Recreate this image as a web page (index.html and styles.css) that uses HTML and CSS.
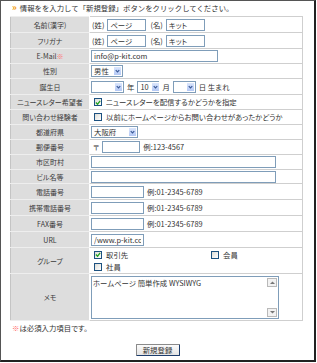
FILE: index.html
```html
<!DOCTYPE html>
<html lang="ja">
<head>
<meta charset="utf-8">
<link rel="stylesheet" href="styles.css">
</head>
<body>
<div class="frame">
  <p class="lead"><span class="mark">»</span>情報をを入力して「新規登録」ボタンをクリックしてください。</p>
  <table class="form">
    <tr class="t16"><th>名前(漢字)</th><td><span class="pre">(姓)</span><input class="tx name" value="ページ"><span class="pre">(名)</span><input class="tx name" value="キット"></td></tr>
    <tr class="t16"><th>フリガナ</th><td><span class="pre">(姓)</span><input class="tx name" value="ページ"><span class="pre">(名)</span><input class="tx name" value="キット"></td></tr>
    <tr><th>E-Mail<span class="req">※</span></th><td><input class="tx mail" value="info@p-kit.com"></td></tr>
    <tr><th>性別</th><td><span class="sel w32"><span class="val">男性</span><span class="arr"><svg viewBox="0 0 8 10" width="8" height="10"><polyline points="2,4 4,6 6,4" fill="none" stroke="#3a5a98" stroke-width="1.4"/></svg></span></span></td></tr>
    <tr class="t16"><th>誕生日</th><td><span class="sel w33"><span class="val"></span><span class="arr"><svg viewBox="0 0 8 10" width="8" height="10"><polyline points="2,4 4,6 6,4" fill="none" stroke="#3a5a98" stroke-width="1.4"/></svg></span></span><span class="unit">年</span><span class="sel w22"><span class="val">10</span><span class="arr"><svg viewBox="0 0 8 10" width="8" height="10"><polyline points="2,4 4,6 6,4" fill="none" stroke="#3a5a98" stroke-width="1.4"/></svg></span></span><span class="unit">月</span><span class="sel w23"><span class="val"></span><span class="arr"><svg viewBox="0 0 8 10" width="8" height="10"><polyline points="2,4 4,6 6,4" fill="none" stroke="#3a5a98" stroke-width="1.4"/></svg></span></span><span class="unit">日 生まれ</span></td></tr>
    <tr><th>ニュースレター希望者</th><td><label class="chk"><span class="cb"><svg viewBox="0 0 7 7" width="7" height="7"><polyline points="1,3.5 3,5.5 6,1.5" fill="none" stroke="#21a121" stroke-width="1.5"/></svg></span>ニュースレターを配信するかどうかを指定</label></td></tr>
    <tr><th>問い合わせ経験者</th><td><label class="chk"><span class="cb"></span>以前にホームページからお問い合わせがあったかどうか</label></td></tr>
    <tr><th>都道府県</th><td><span class="sel w47"><span class="val">大阪府</span><span class="arr"><svg viewBox="0 0 8 10" width="8" height="10"><polyline points="2,4 4,6 6,4" fill="none" stroke="#3a5a98" stroke-width="1.4"/></svg></span></span></td></tr>
    <tr><th>郵便番号</th><td><span class="pre zipmark">〒</span><input class="tx zip" value=""><span class="eg">例:123-4567</span></td></tr>
    <tr><th>市区町村</th><td><input class="tx wide" value=""></td></tr>
    <tr class="t14"><th>ビル名等</th><td><input class="tx wide" value=""></td></tr>
    <tr class="t16"><th>電話番号</th><td><input class="tx tel" value=""><span class="eg">例:01-2345-6789</span></td></tr>
    <tr class="t16"><th>携帯電話番号</th><td><input class="tx tel" value=""><span class="eg">例:01-2345-6789</span></td></tr>
    <tr class="t16"><th>FAX番号</th><td><input class="tx tel" value=""><span class="eg">例:01-2345-6789</span></td></tr>
    <tr class="t16"><th>URL</th><td><input class="tx tel url" value="/www.p-kit.com"></td></tr>
    <tr class="t26"><th>グループ</th><td><div class="opts">
      <label class="chk"><span class="cb"><svg viewBox="0 0 7 7" width="7" height="7"><polyline points="1,3.5 3,5.5 6,1.5" fill="none" stroke="#21a121" stroke-width="1.5"/></svg></span>取引先</label>
      <label class="chk"><span class="cb"></span>会員</label>
      <label class="chk"><span class="cb"></span>社員</label>
    </div></td></tr>
    <tr class="t47"><th>メモ</th><td class="memocell"><div class="memo"><textarea class="memotext">ホームページ 簡単作成 WYSIWYG</textarea><div class="sb"><span class="sbtn"><svg viewBox="0 0 7 5" width="7" height="5"><polygon points="1,4 3.5,1.5 6,4" fill="#777"/></svg></span><span class="sbtn"><svg viewBox="0 0 7 5" width="7" height="5"><polygon points="1,1 3.5,3.5 6,1" fill="#777"/></svg></span></div></div></td></tr>
  </table>
  <p class="note"><span class="req">※</span>は必須入力項目です。</p>
  <div class="actions"><button class="submit" type="button">新規登録</button></div>
</div>
</body>
</html>
```
FILE: styles.css
```css
* { box-sizing: border-box; }
html, body { margin: 0; padding: 0; background: #fff; }
body {
  font-family: "Noto Sans CJK JP", "Noto Sans", sans-serif;
  font-size: 7.4px;
  color: #333;
  font-feature-settings: "palt";
}
.frame {
  width: 316px;
  height: 362px;
  border-top: 1px solid #555;
  border-left: 1px solid #555;
  border-right: 2px solid #222;
  border-bottom: 2px solid #222;
  padding-left: 9px;
}
.lead {
  margin: 0;
  height: 15px;
  padding: 1px 0 0 2px;
  line-height: 12px;
  white-space: nowrap;
  font-feature-settings: normal;
}
.mark {
  color: #f39800;
  font-weight: bold;
  font-size: 9px;
  margin-right: 3px;
}
.req { color: #f66; }
.form {
  width: 293px;
  border-collapse: collapse;
  border: 1px solid #c4c4c4;
}
.form th, .form td {
  border: 1px solid #cfcfcf;
  height: 15px;
  padding: 0 2px 0 1px;
  line-height: 12px;
  white-space: nowrap;
  vertical-align: middle;
}
.form tr.t14 > * { height: 14px; }
.form tr.t16 > * { height: 16px; }
.form tr.t26 > * { height: 26px; }
.form tr.t47 > * { height: 47px; }
.form th {
  width: 79px;
  background: #dddddd;
  font-weight: normal;
  font-size: 7px;
  color: #3a3a3a;
  text-align: center;
  padding: 0 1px;
  border-color: #eeeeee #ffffff #eeeeee #c4c4c4;
}
.tx {
  height: 12px;
  margin: 0;
  padding: 0 2px;
  border: 1px solid #7f9db9;
  font: inherit;
  color: #333;
  background: #fff;
  vertical-align: top;
  font-feature-settings: "palt";
}
.pre { margin: 0 3px 0 1px; vertical-align: top; }
.name { width: 39px; margin-right: 3px; }
.mail { width: 127px; }
.zip { width: 38px; }
.zipmark { margin-left: 2px; margin-right: 3px; }
.wide { width: 185px; }
.tel { width: 53px; }
.eg { margin-left: 3px; vertical-align: top; }
.sel {
  display: inline-flex;
  height: 12px;
  border: 1px solid #7f9db9;
  background: #fff;
  vertical-align: top;
}
.sel .val { flex: 1; padding: 0 2px; line-height: 10px; }
.sel .arr {
  width: 9px;
  background: linear-gradient(#dbe6fc, #b4c8f5);
  border: 1px solid #fff;
  display: flex;
  align-items: center;
  justify-content: center;
}
.sel .arr svg { display: block; }
.w32 { width: 32px; }
.w33 { width: 33px; }
.w22 { width: 22px; }
.w23 { width: 23px; }
.w47 { width: 47px; }
.unit { margin: 0 3px; vertical-align: top; }
.chk {
  display: inline-flex;
  align-items: center;
  gap: 4px;
  padding-left: 3px;
  height: 12px;
  vertical-align: top;
}
.cb {
  width: 8px;
  height: 8px;
  border: 1px solid #1c5180;
  background: linear-gradient(135deg, #dcdcd6, #fff);
  display: flex;
  align-items: center;
  justify-content: center;
}
.cb svg { display: block; }
.opts {
  display: grid;
  grid-template-columns: 117px auto;
  grid-auto-rows: 11px;
  row-gap: 1px;
}
.opts .chk { height: 11px; }
.memocell { padding: 1px; }
.memo {
  display: flex;
  width: 188px;
  height: 43px;
  border: 1px solid #7f9db9;
  background: #fff;
}
.memotext {
  flex: 1;
  border: 0;
  resize: none;
  overflow: hidden;
  font: inherit;
  color: #333;
  padding: 1px 1px;
  line-height: 10px;
  outline: none;
  font-feature-settings: "palt";
}
.sb {
  width: 11px;
  display: flex;
  flex-direction: column;
  justify-content: space-between;
  padding: 1px 1px 1px 0;
}
.sbtn {
  width: 10px;
  height: 9px;
  border: 1px solid #b9b9b9;
  background: #f2f2f2;
  display: flex;
  align-items: center;
  justify-content: center;
}
.note {
  margin: 0;
  padding: 1px 0 0 2px;
  line-height: 11px;
}
.actions {
  display: flex;
  justify-content: center;
  padding-top: 11px;
  padding-right: 9px;
}
.submit {
  width: 44px;
  height: 12px;
  padding: 0;
  font: inherit;
  line-height: 10px;
  color: #333;
  border: 1px solid #1c3c6c;
  border-left-color: #8a8a8a;
  border-top-color: #8a8a8a;
  border-radius: 1px;
  background: linear-gradient(#fbfbfb, #e4e4e4);
  font-feature-settings: "palt";
}
```
